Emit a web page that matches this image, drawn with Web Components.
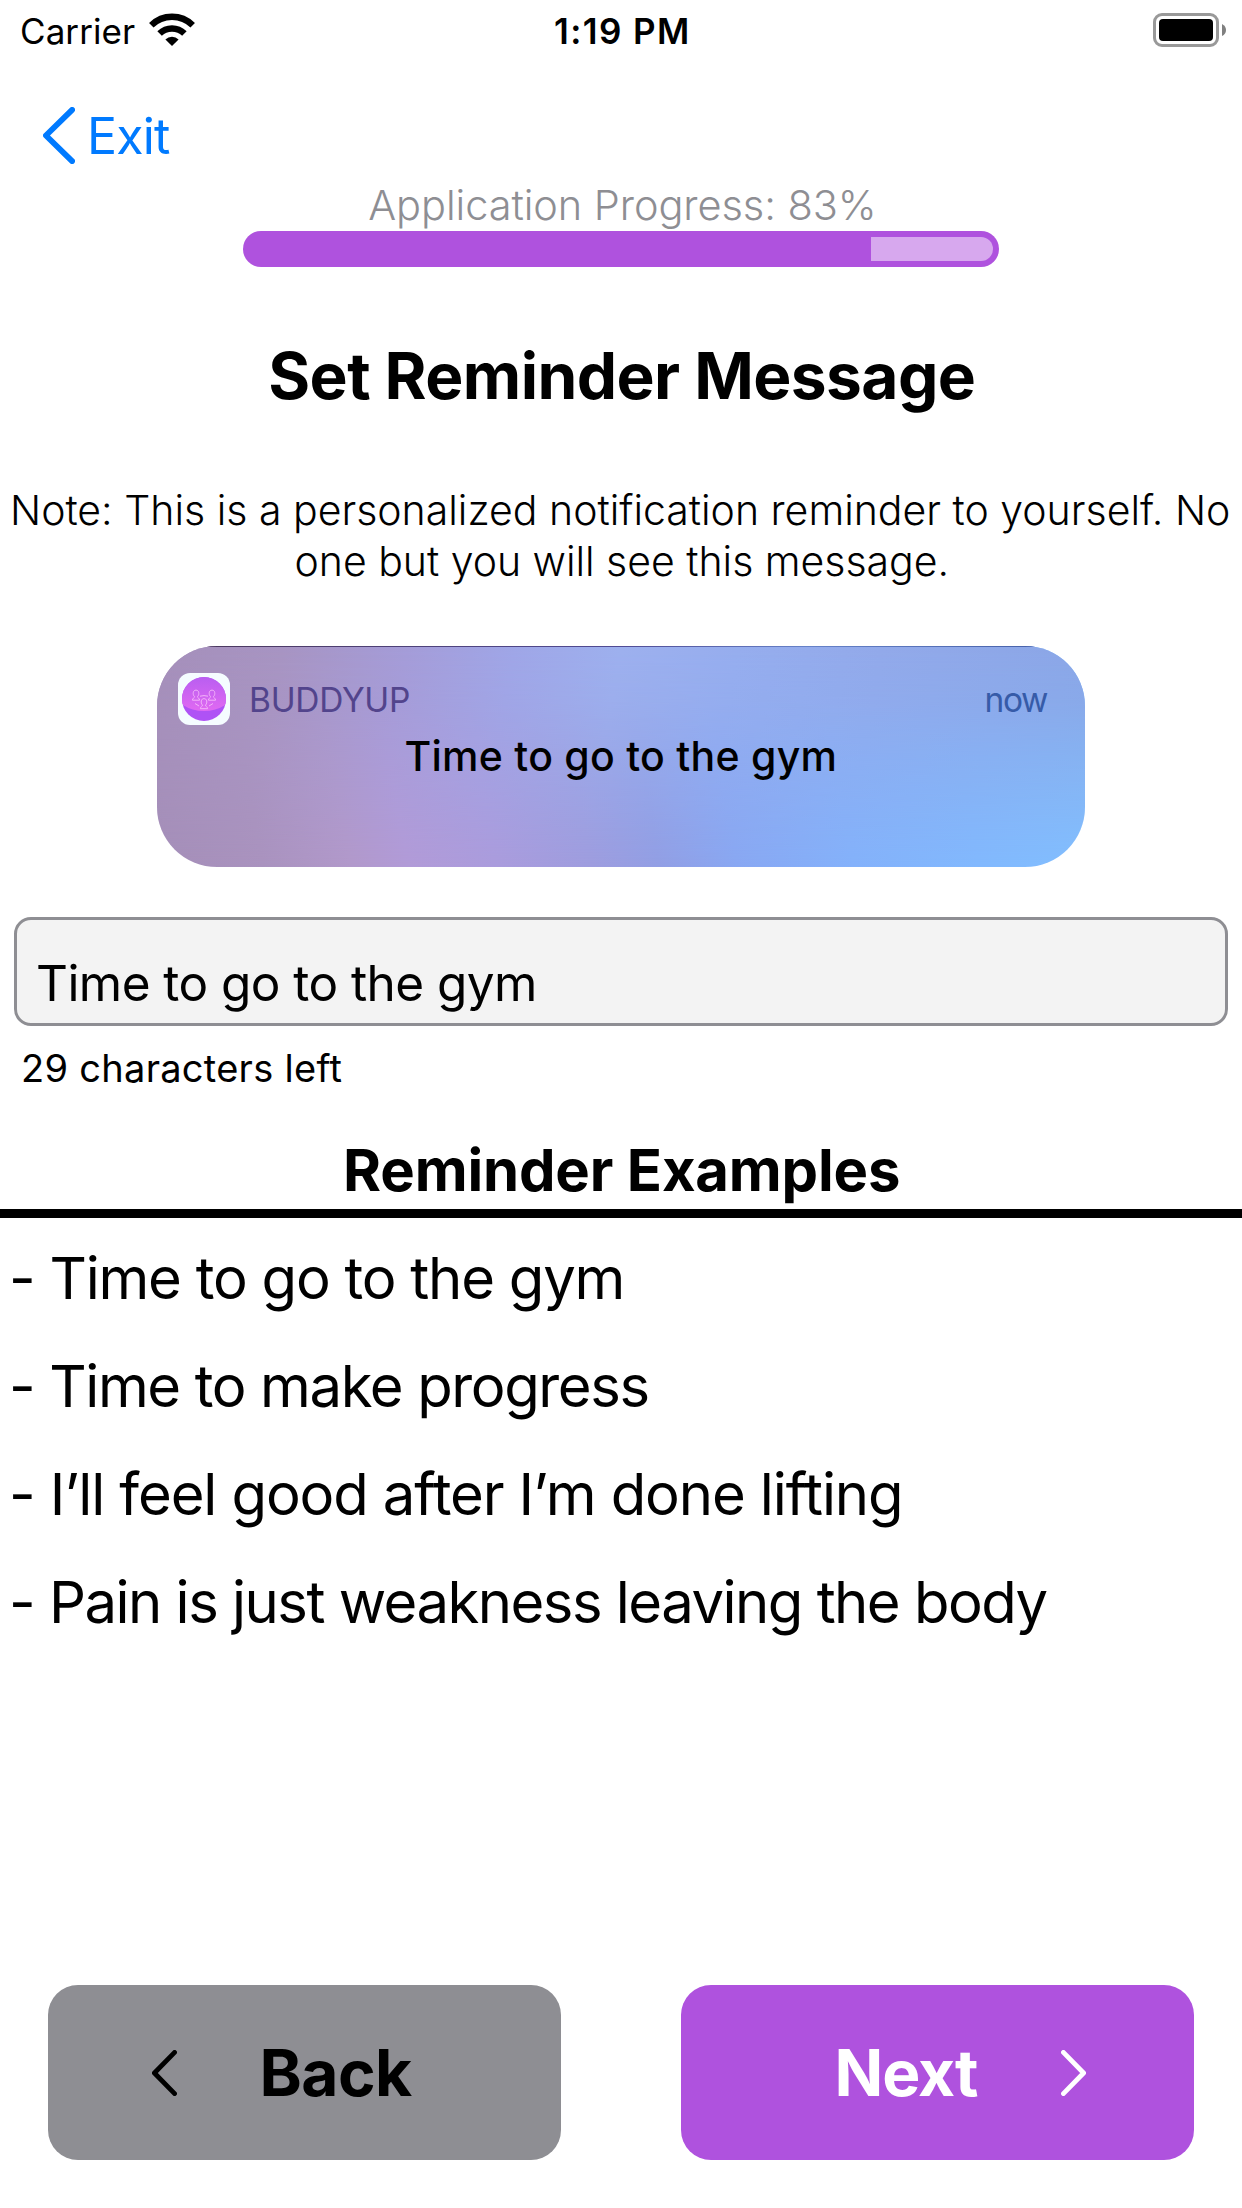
<!DOCTYPE html>
<html lang="en">
<head>
<meta charset="utf-8">
<title>Set Reminder Message</title>
<style>
  html, body { margin: 0; padding: 0; background: #fff; }
  body { width: 1242px; height: 2208px; overflow: hidden; font-family: Inter, "Liberation Sans", sans-serif; color: #000; }
</style>
</head>
<body>
<reminder-screen></reminder-screen>

<script>
const define = (name, html, setup) => {
  const template = document.createElement('template');
  template.innerHTML = html;
  customElements.define(name, class extends HTMLElement {
    constructor() {
      super();
      this.attachShadow({ mode: 'open' }).append(template.content.cloneNode(true));
    }
    connectedCallback() { if (setup) setup(this, this.shadowRoot); }
  });
};

/* A single line of text tracked so its visible ink spans exactly `ink` pixels. */
const pen = document.createElement('canvas').getContext('2d');
class TextRun extends HTMLElement {
  constructor() {
    super();
    this.attachShadow({ mode: 'open' }).innerHTML = `
      <style>
        :host { display: block; flex: none; white-space: nowrap; }
        span { display: inline-block; white-space: pre; font-kerning: normal; }
      </style><span></span>`;
  }
  connectedCallback() {
    const span = this.shadowRoot.querySelector('span');
    const text = this.getAttribute('text');
    const size = +this.getAttribute('size');
    const ink = +this.getAttribute('ink');
    const weight = this.getAttribute('weight') || 400;
    span.textContent = text;
    this.style.width = ink + 'px';
    this.style.fontSize = size + 'px';
    this.style.fontWeight = weight;
    this.style.lineHeight = (this.getAttribute('line') || Math.round(size * 1.22)) + 'px';
    pen.font = `${weight} ${size}px Inter, "Liberation Sans", sans-serif`;
    const m = pen.measureText(text);
    const natural = m.actualBoundingBoxLeft + m.actualBoundingBoxRight;
    span.style.letterSpacing = ((ink - natural) / (text.length - 1)).toFixed(3) + 'px';
    span.style.marginLeft = m.actualBoundingBoxLeft.toFixed(2) + 'px';
  }
}
customElements.define('text-run', TextRun);

define('chevron-icon', `
  <style>
    :host { display: block; flex: none; }
    svg { display: block; }
    path { fill: none; stroke: currentColor; stroke-linecap: round; stroke-linejoin: round; }
  </style>
  <svg><path/></svg>`, (el, root) => {
  const w = +el.getAttribute('w'), h = +el.getAttribute('h'), s = +el.getAttribute('stroke'), p = s / 2;
  const svg = root.querySelector('svg'), path = root.querySelector('path');
  svg.setAttribute('width', w);
  svg.setAttribute('height', h);
  path.setAttribute('stroke-width', s);
  path.setAttribute('d', el.getAttribute('dir') === 'right'
    ? `M${p} ${p}L${w - p} ${h / 2}L${p} ${h - p}`
    : `M${w - p} ${p}L${p} ${h / 2}L${w - p} ${h - p}`);
});

define('wifi-icon', `
  <style>:host { display: block; } svg { display: block; }</style>
  <svg width="46" height="33" viewBox="0 0 46 33">
    <g fill="none" stroke="#000" stroke-width="6.4">
      <path d="M2.3 12.2A29.5 29.5 0 0 1 43.7 12.2"/>
      <path d="M10.6 20.6A17.6 17.6 0 0 1 35.4 20.6"/>
    </g>
    <path d="M16.4 26.5A9.4 9.4 0 0 1 29.6 26.5L23 33Z"/>
  </svg>`);

define('battery-icon', `
  <style>:host { display: block; } svg { display: block; }</style>
  <svg width="74" height="34" viewBox="0 0 74 34">
    <rect x="1.5" y="1.5" width="63" height="31" rx="7.5" fill="none" stroke="#999" stroke-width="3"/>
    <rect x="6" y="6" width="54" height="22" rx="4"/>
    <path d="M69 11Q73 13 73 17T69 23Z" fill="#808080"/>
  </svg>`);

define('status-bar', `
  <style>
    :host { display: grid; grid-template-columns: 1fr auto 1fr; align-items: center; height: 62px; padding: 0 15px 0 22px; }
    .left { display: flex; align-items: center; gap: 14px; }
    .right { display: flex; justify-content: flex-end; }
    .time { margin-right: 7px; }
    wifi-icon { margin-bottom: 3px; }
    battery-icon { margin-bottom: 2px; }
  </style>
  <div class="left"><text-run text="Carrier" size="35" ink="113"></text-run><wifi-icon></wifi-icon></div>
  <text-run class="time" text="1:19 PM" size="35" weight="600" ink="132"></text-run>
  <div class="right"><battery-icon></battery-icon></div>`);

define('exit-nav', `
  <style>
    :host { display: flex; align-items: center; gap: 16px; height: 88px; padding: 30px 0 0 43px; color: #007aff; }
    chevron-icon { margin-bottom: 2px; }
  </style>
  <chevron-icon w="32" h="57" stroke="5.8"></chevron-icon>
  <text-run text="Exit" size="50" ink="79"></text-run>`);

define('progress-meter', `
  <style>
    :host { display: flex; flex-direction: column; align-items: center; gap: 1px; color: #8e8e93; }
    .bar { box-sizing: border-box; width: 756px; height: 36px; padding: 6px; border-radius: 18px; background: #af52de; display: flex; justify-content: flex-end; }
    .rest { width: 122px; height: 24px; border-radius: 0 12px 12px 0; background: #d7a8ee; }
  </style>
  <text-run text="Application Progress: 83%" size="41.5" weight="300" ink="503.5" line="50"></text-run>
  <div class="bar"><div class="rest"></div></div>`);

define('app-badge', `
  <style>:host { display: block; flex: none; } svg { display: block; }</style>
  <svg width="52" height="52" viewBox="0 0 52 52">
    <defs>
      <linearGradient id="top" x1="0" y1="0" x2="0" y2="1"><stop offset="0" stop-color="#b25cf0"/><stop offset="1" stop-color="#e069f2"/></linearGradient>
      <clipPath id="disc"><circle cx="26" cy="26" r="22"/></clipPath>
      <g id="person"><path d="M-3.6 5.2C-3.6 2.9-1.4 3.2-1.5 1.6C-2.7.4-3-1-2.7-2.6C-2.3-5.6 2.3-5.6 2.7-2.6C3-1 2.7.4 1.5 1.6C1.4 3.2 3.6 2.9 3.6 5.2Z"/></g>
    </defs>
    <rect width="52" height="52" rx="12" fill="#f5fcff"/>
    <g clip-path="url(#disc)">
      <rect width="52" height="52" fill="#af52f5"/>
      <ellipse cx="26" cy="18" rx="29" ry="20" fill="url(#top)"/>
    </g>
    <g fill="none" stroke="#f3b4f9" stroke-width="1">
      <use href="#person" x="18" y="22"/><use href="#person" x="34" y="22"/><use href="#person" x="26" y="30.5"/>
      <path d="M22 23.2Q26 22 30 23.2M17 30.5L21 33M35 30.5L31 33"/>
    </g>
  </svg>`);

define('notification-card', `
  <style>
    :host { display: flex; flex-direction: column; align-items: center; box-sizing: border-box; position: relative; isolation: isolate; overflow: hidden;
      width: 928px; height: 221px; border-radius: 60px;
      background: linear-gradient(80deg, #a58fb9 0, #aa93bf 11%, #b299cb 20%, #b29bd8 26%, #ab9cdd 35%, #9e9ddf 45%, #929fe5 52%, #89a8f3 60%, #84b2fb 72%, #82b9fe 85%, #82c1ff 100%); }
    :host::before { content: ""; position: absolute; z-index: -1; inset: 0;
      background: linear-gradient(100deg, #a58fba 0, #a794c2 13%, #a49cd8 26%, #9fa6e7 37%, #9db0ee 48%, #96adee 60%, #92a9ea 75%, #89a5e6 100%);
      mask-image: linear-gradient(#000 0, #000d 25%, #0007 55%, #0002 85%, #0000 100%); }
    :host::after { content: ""; position: absolute; z-index: -1; inset: 0 0 auto; height: 1px; background: linear-gradient(90deg, #4b3659, #504b94 50%, #6682c8 70%, #415ba3); }
    .head { box-sizing: border-box; display: flex; align-items: center; width: 100%; height: 52px; margin-top: 27px; padding: 0 37px 0 21px; }
    .name { color: #52448c; margin: 2px 0 0 21px; }
    .when { color: #365ba8; margin: 2px 0 0 auto; }
    .message { margin: 6px 2px 0 0; }
  </style>
  <div class="head">
    <app-badge></app-badge>
    <text-run class="name" text="BUDDYUP" size="33.5" ink="158"></text-run>
    <text-run class="when" text="now" size="33.5" ink="61.5"></text-run>
  </div>
  <text-run class="message" text="Time to go to the gym" size="41" weight="500" ink="429" line="50"></text-run>`);

define('message-field', `
  <style>
    :host { display: block; }
    .field { box-sizing: border-box; margin: 0 14px; height: 109px; padding: 33px 0 0 21px; border: 3px solid #8e8e93; border-radius: 17px; background: #f3f3f3; }
    .count { margin: 19px 0 0 23px; }
  </style>
  <div class="field"><text-run text="Time to go to the gym" size="49.5" ink="496" line="60"></text-run></div>
  <text-run class="count" text="29 characters left" size="38" ink="318.5" line="46"></text-run>`);

define('example-list', `
  <style>
    :host { display: block; }
    .title { margin: 0 auto; padding-left: 3px; }
    .rule { height: 9px; margin: 4px 0 6px; background: #000; }
    ul { list-style: none; margin: 0; padding: 0 0 0 13px; }
  </style>
  <text-run class="title" text="Reminder Examples" size="58" weight="700" ink="553" line="70"></text-run>
  <div class="rule"></div>
  <ul>
    <li><text-run text="- Time to go to the gym" size="58" ink="608.5" line="108"></text-run></li>
    <li><text-run text="- Time to make progress" size="58" ink="634.5" line="108"></text-run></li>
    <li><text-run text="- I’ll feel good after I’m done lifting" size="58" ink="887" line="108"></text-run></li>
    <li><text-run text="- Pain is just weakness leaving the body" size="58" ink="1034.5" line="108"></text-run></li>
  </ul>`);

define('nav-button', `
  <style>
    :host { box-sizing: border-box; display: flex; align-items: center; width: 513px; height: 175px; border-radius: 30px; }
  </style><slot></slot>`);

define('reminder-screen', `
  <style>
    :host { display: flex; flex-direction: column; width: 1242px; height: 2208px; background: #fff; }
    .title { margin: 70px auto 0; padding-left: 2px; }
    .note { display: flex; flex-direction: column; align-items: center; margin-top: 70px; }
    notification-card { margin: 59px auto 0; }
    message-field { margin-top: 50px; }
    example-list { margin-top: 44px; }
    footer { display: flex; justify-content: space-between; margin: auto 48px 48px; }
    .back { background: #8e8e93; padding-left: 104px; gap: 86.5px; }
    .next { background: #af52de; color: #fff; padding-left: 157.5px; gap: 83px; }
  </style>
  <status-bar></status-bar>
  <exit-nav></exit-nav>
  <progress-meter></progress-meter>
  <text-run class="title" text="Set Reminder Message" size="64" weight="700" ink="703.5" line="78"></text-run>
  <div class="note">
    <text-run text="Note: This is a personalized notification reminder to yourself. No" size="41" weight="300" ink="1216" line="51"></text-run>
    <text-run text="one but you will see this message." size="41" weight="300" ink="649" line="51"></text-run>
  </div>
  <notification-card></notification-card>
  <message-field></message-field>
  <example-list></example-list>
  <footer>
    <nav-button class="back"><chevron-icon w="25" h="46" stroke="4.8"></chevron-icon><text-run text="Back" size="64" weight="700" ink="148.5"></text-run></nav-button>
    <nav-button class="next"><text-run text="Next" size="64" weight="700" ink="139.5"></text-run><chevron-icon dir="right" w="25" h="46" stroke="4.8"></chevron-icon></nav-button>
  </footer>`);
</script>
</body>
</html>
